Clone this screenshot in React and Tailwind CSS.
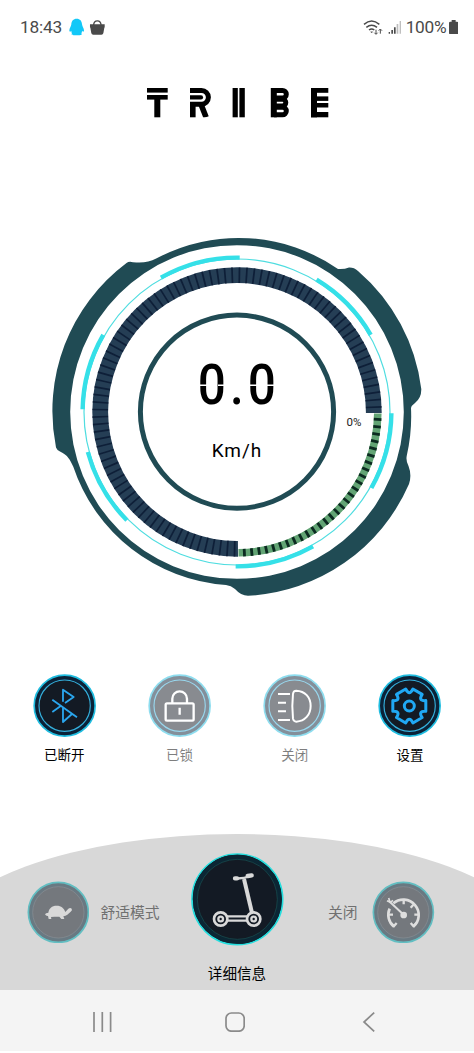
import React from "react";

const rad = (deg) => (deg * Math.PI) / 180;
const C = { x: 237, y: 412 };

// Angles are measured clockwise from twelve o'clock.
const at = (r, deg) =>
  `${(C.x + r * Math.sin(rad(deg))).toFixed(2)} ${(C.y - r * Math.cos(rad(deg))).toFixed(2)}`;
const arc = (r, from, to) =>
  `M${at(r, from)}A${r} ${r} 0 ${to - from > 180 ? 1 : 0} 1 ${at(r, to)}`;

const thickArcs = [
  [-29.5, 1],
  [31, 60],
  [90.5, 119.5],
  [150.5, 180.5],
  [225.5, 255],
  [271, 300],
];

const bezel =
  "M156.7 258.3 C149 262.4 143 262.8 133 262.2 Q129 261 126.5 263 A185 185 0 0 0 56 447.5 Q56.5 449.5 60 451.5 C68 455 70 460 73.3 466.7 " +
  "A174 174 0 0 0 226 585 Q231 585.5 235 589 Q241 595.8 248 595.8 A186 186 0 0 0 409 484 Q412 475 408.5 466 Q405.8 461 406.7 456 " +
  "A175 175 0 0 0 411 408 Q411.5 405.5 415 403 Q421.5 398 421.3 389 A186 186 0 0 0 358 271 Q354 267.4 349 267.6 Q344 269.5 338 269 " +
  "A174.7 174.7 0 0 0 156.7 258.3 Z M403.8 412 A166.8 166.8 0 1 0 70.2 412 A166.8 166.8 0 1 0 403.8 412 Z";

function Gauge() {
  return (
    <div className="relative h-[370px] w-full shrink-0">
      <svg viewBox="0 230 474 370" className="block h-[370px] w-[474px]" fill="none">
        <path d={bezel} fill="#204b54" fillRule="evenodd" />
        <circle cx={C.x} cy={C.y} r="153" stroke="#4fdde0" strokeWidth="1.2" />
        {thickArcs.map(([a, b]) => (
          <path key={a} d={arc(154.4, a, b)} stroke="#35e0e8" strokeWidth="4.4" />
        ))}
        <path d={arc(136.8, 179.6, 450.4)} stroke="#253e55" strokeWidth="15.8" />
        {Array.from({ length: 90 }, (_, i) => 181 + i * 3).map((a) => (
          <path key={a} d={`M${at(129, a)}L${at(144.6, a)}`} stroke="#0e1f38" strokeWidth="1.7" />
        ))}
        <path d={arc(140.8, 90.6, 179.4)} stroke="#62a474" strokeWidth="7.6" />
        {Array.from({ length: 29 }, (_, i) => 93 + i * 3).map((a) => (
          <path key={a} d={`M${at(137, a)}L${at(144.6, a)}`} stroke="#0b2a20" strokeWidth="2.8" />
        ))}
        <circle cx={C.x} cy="411.7" r="96.6" stroke="#204b54" strokeWidth="5" />
      </svg>

      <div className="absolute inset-x-0 top-[122px] flex flex-col items-center">
        <div className="relative h-[66px] w-[90px]">
          <div className="flex origin-center scale-x-[0.9] justify-center whitespace-nowrap pl-[4px] font-[Roboto,sans-serif] text-[55px] font-medium leading-[66px] tracking-[4.4px] text-black">
            0.0
          </div>
          <svg viewBox="192 352 90 66" className="absolute inset-0 h-[66px] w-[90px]" stroke="#fff" strokeWidth="1.4">
            <path d="M199 385.3h10M218 385.3h10M248 385.3h10M267 385.3h10" />
          </svg>
        </div>
        <div className="mt-[22px] font-[Roboto,sans-serif] text-[19px] leading-[22px] tracking-[1px] text-black">Km/h</div>
      </div>
      <div className="absolute left-[346.5px] top-[185px] font-[Roboto,sans-serif] text-[11.5px] leading-[14px] text-[#222]">0%</div>
    </div>
  );
}

function Logo() {
  return (
    <svg viewBox="140 80 200 45" className="h-[45px] w-[200px]" fill="#000" role="img" aria-label="TRIIBE">
      <rect x="147" y="88" width="20.7" height="4.6" />
      <rect x="147" y="95" width="20.7" height="4.6" />
      <rect x="154.3" y="99" width="6" height="18.3" />
      <g fill="none" stroke="#000">
        <path d="M190 90.4h11.5a6.9 6.9 0 0 1 0 13.8h-11.5" strokeWidth="5" />
        <path d="M190 97.4h11" strokeWidth="4.2" strokeLinecap="round" />
        <path d="M192.8 102v15.3" strokeWidth="5.6" />
        <path d="M200.5 103l5.6 14.3" strokeWidth="5.6" />
      </g>
      <rect x="187" y="93" width="3" height="9" fill="#fff" />
      <rect x="202" y="117.3" width="9" height="3" fill="#fff" />
      <rect x="232.6" y="88" width="5.2" height="29.3" />
      <rect x="239.4" y="88" width="5.4" height="29.3" />
      <rect x="270.8" y="88" width="6" height="29.3" />
      <g fill="none" stroke="#000" strokeWidth="5">
        <path d="M274 90.5h8.500a3.600 3.600 0 0 1 0 7.600h-8.500" />
        <path d="M274 99.300h8.500a3.300 3.300 0 0 1 0 6.600h-8.500" />
        <path d="M274 107.200h8.500a3.600 3.600 0 0 1 0 7.600h-8.500" />
      </g>
      <rect x="311" y="88" width="6" height="29.3" />
      <rect x="311" y="88" width="17.3" height="4.8" />
      <rect x="311" y="96.4" width="17.3" height="4.5" />
      <rect x="311" y="103" width="17.3" height="4.5" />
      <rect x="311" y="112" width="17.3" height="5.3" />
    </svg>
  );
}

function StatusBar() {
  return (
    <header className="flex h-[54px] shrink-0 items-center pl-[20px] pr-[16px] font-[Roboto,sans-serif] text-[17.3px] text-[#4a4a4a]">
      <span className="w-[43px] leading-5 tracking-[-0.2px]">18:43</span>
      <svg viewBox="207 52 45 54" className="ml-[6px] h-[18px] w-[15px]" fill="#12c8f8">
        <path d="M230 54c-10 0-16 7-16 17-1 6-5 11-6 18 0 5 3 5 6 1 0 4 1 6 2 8-3 5-1 6 14 6s17-1 14-6c1-2 2-4 2-8 3 4 6 4 6-1-1-7-5-12-6-18 0-10-6-17-16-17z" />
      </svg>
      <svg viewBox="268 54 50 52" className="ml-[5px] h-[17px] w-[17px]" fill="#4a4a4a">
        <path d="M270 70h45v10h-1l-3 17q-1 5-6 5h-25q-5 0-6-5l-3-17h-1z" />
        <path d="M281 73c1-18 22-18 23 0" fill="none" stroke="#4a4a4a" strokeWidth="4" />
      </svg>
      <span className="grow" />
      <svg viewBox="368 52 60 50" className="h-[16.7px] w-[20px]" fill="none" stroke="#4a4a4a" strokeWidth="4.5">
        <path d="M371 68q23-20 46 0M378 77q16-13 32 0M386 85q8-6 16 0" />
        <path d="M391 90h6l-3 4z" fill="#4a4a4a" strokeWidth="1" />
        <path d="M407 84v13M402 93l5 5 5-5M420 96v-13M415 87l5-5 5 5" strokeWidth="3" />
      </svg>
      <svg viewBox="448 60 40 42" className="ml-[5px] h-[14px] w-[13.3px]" fill="#4a4a4a">
        <path d="M450 96h4v5h-4zM458 90h5v11h-5zM466 82h5v19h-5z" />
        <path d="M474 72h5v29h-5zM483 63h4v38h-4z" fill="#bdbdbd" />
      </svg>
      <span className="ml-[4px] w-[43px] leading-5 tracking-[-0.3px]">100%</span>
      <svg viewBox="635 57 28 43" className="h-[14.3px] w-[9.3px]" fill="#4a4a4a">
        <path d="M643 57h12v5h4q4 0 4 4v30q0 4-4 4h-20q-4 0-4-4v-30q0-4 4-4h4z" />
      </svg>
    </header>
  );
}

const gearPath = (() => {
  const p = (r, d) => `${(518 + r * Math.sin(rad(d))).toFixed(1)} ${(137 - r * Math.cos(rad(d))).toFixed(1)}`;
  let d = "";
  for (let k = 0; k < 6; k++) {
    const a = 30 + 60 * k;
    d += `${k ? "L" : "M"}${p(52, a - 18)}L${p(52, a + 18)}Q${p(29, a + 30)} ${p(52, a + 42)}`;
  }
  return d + "Z";
})();

function RoundButton({ viewBox, label, dim, children }) {
  const [x, y, s] = viewBox.split(" ").map(Number);
  const cx = x + s / 2;
  const cy = y + s / 2;
  return (
    <button className={`flex w-[115.3px] flex-col items-center ${dim ? "opacity-50" : ""}`}>
      <svg viewBox={viewBox} className="h-[63.3px] w-[63.3px]" fill="none" strokeLinejoin="round">
        <circle cx={cx} cy={cy} r="91.5" fill="#0b2238" stroke="#20bde0" strokeWidth="5" />
        <circle cx={cx} cy={cy} r="77" fill="#131a24" stroke="#35b0dc" strokeWidth="3.5" />
        {children}
      </svg>
      <span className="mt-[7.5px] font-['Noto_Sans_CJK_SC',sans-serif] text-[13.5px] leading-5 text-black">{label}</span>
    </button>
  );
}

function Controls() {
  return (
    <section className="mt-[73.5px] flex h-[96px] shrink-0 pl-[6.5px]">
      <RoundButton viewBox="97 41 190 190" label="已断开">
        <path d="M187 124V88l32 22-26 18M155 118l74 53M155 155l24-17M187 141v44l27-24" stroke="#2aa6ee" strokeWidth="5.5" />
      </RoundButton>
      <RoundButton viewBox="444 41 190 190" label="已锁" dim>
        <g stroke="#fff" strokeWidth="7">
          <rect x="497" y="129" width="84" height="52" rx="4" />
          <path d="M517 129v-14a22 22 0 0 1 44 0v14M539 142v21" />
        </g>
      </RoundButton>
      <RoundButton viewBox="78 41 190 190" label="关闭" dim>
        <g stroke="#fff" strokeWidth="6">
          <path d="M123 101h36M123 127h24M123 153h24M123 179h36" />
          <path d="M168 101q1-10 10-10c26 1 43 20 43 46s-17 46-43 47q-8 0-10-9-4-38 0-74z" />
        </g>
      </RoundButton>
      <RoundButton viewBox="424 41 190 190" label="设置">
        <path d={gearPath} stroke="#20a8f4" strokeWidth="9" />
        <circle cx="518" cy="137" r="15" stroke="#20a8f4" strokeWidth="9" />
      </RoundButton>
    </section>
  );
}

function SideDial({ viewBox, children }) {
  const [x, y, s] = viewBox.split(" ").map(Number);
  return (
    <svg viewBox={viewBox} className="h-[62.7px] w-[62.7px] shrink-0" fill="none">
      <circle cx={x + s / 2} cy={y + s / 2} r="90" fill="#697982" stroke="#62bec2" strokeWidth="5" />
      <circle cx={x + s / 2} cy={y + s / 2} r="77" fill="#74787d" stroke="#8a9095" strokeWidth="2" />
      {children}
    </svg>
  );
}

function BottomPanel() {
  return (
    <section className="relative h-[156px] w-full shrink-0 overflow-hidden font-['Noto_Sans_CJK_SC',sans-serif]">
      <div className="absolute left-[-62px] top-0 h-[222px] w-[598px] rounded-[50%] bg-[#d8d8d8]" />
      <div className="absolute inset-x-0 bottom-0 h-[42px] bg-[#d8d8d8]" />
      <div className="relative flex h-[131px] items-center">
        <div className="mt-[25px] flex w-[191px] items-center pl-[26.7px]">
          <SideDial viewBox="80 181 188 188">
            <path
              d="M134 281q2-5 10-5c2-13 10-21 25-21 14 0 22 8 26 19l9-10q6-4 10 0 3 5-3 9l-10 9q-5 4-12 5l3 8h-9l-6-7h-15q-8 0-10 1l1 6h-8l-2-9q-6 1-9-5z"
              fill="#d9d9d9"
            />
          </SideDial>
          <span className="ml-[11px] whitespace-nowrap text-[14.8px] leading-5 text-[#707070]">舒适模式</span>
        </div>
        <svg viewBox="572 100 278 278" className="h-[92.7px] w-[92.7px] shrink-0" fill="none">
          <circle cx="711" cy="239" r="136" fill="#131a24" stroke="#25dede" strokeWidth="5" />
          <circle cx="711" cy="239" r="127" stroke="#0b2634" strokeWidth="13" />
          <circle cx="711" cy="239" r="120" stroke="#175456" strokeWidth="2" />
          <g stroke="#d9d9d9" strokeLinecap="round">
            <path d="M703 176q24 2 48-7" strokeWidth="7" />
            <path d="M704 176h6M742 169l12-2" strokeWidth="13" />
            <path d="M731 178l24 102" strokeWidth="12" strokeLinecap="butt" />
            <path d="M680 290h58M680 303h58" strokeWidth="7" />
            <circle cx="661" cy="298" r="20" strokeWidth="8" fill="#131a24" />
            <circle cx="760" cy="298" r="20" strokeWidth="8" fill="#131a24" />
            <circle cx="661" cy="298" r="7" strokeWidth="7" />
            <circle cx="760" cy="298" r="7" strokeWidth="7" />
          </g>
        </svg>
        <div className="mt-[25px] flex grow items-center justify-end pr-[39.3px]">
          <span className="mr-[14.5px] whitespace-nowrap text-[14.8px] leading-5 text-[#707070]">关闭</span>
          <SideDial viewBox="405 181 188 188">
            <g stroke="#dedede" strokeWidth="8">
              <path d="M471 318a45 45 0 0 1-13-54M469 248a45 45 0 0 1 60 70" />
              <path d="M462 307l9 9 8-9M538 307l-9 9-8-9M500 238v13M529 252l-8 9M545 282h-13M455 282h13" strokeWidth="7" />
              <path d="M458 243l42 39" strokeWidth="6" />
              <path d="M455 232l4 12M450 240l10 5 8-6" strokeWidth="5" />
            </g>
            <circle cx="500" cy="283" r="10" fill="#dedede" />
          </SideDial>
        </div>
      </div>
      <div className="relative -mt-[2px] text-center text-[14.6px] leading-5 text-black">详细信息</div>
    </section>
  );
}

function NavBar() {
  return (
    <nav className="grid h-[61px] shrink-0 grid-cols-[133px_135.5px_16px] items-center bg-[#f4f4f4] pl-[92px] pt-[3px]">
      <svg viewBox="0 0 20 20" className="h-5 w-5" stroke="#8a8a8a" strokeWidth="1.7">
        <path d="M2 0v20M10.3 0v20M18.6 0v20" />
      </svg>
      <svg viewBox="0 0 20 20" className="h-5 w-5" fill="none" stroke="#8a8a8a" strokeWidth="1.7">
        <rect x="1" y="1" width="18.2" height="18.2" rx="5.5" />
      </svg>
      <svg viewBox="0 0 16 20" className="h-5 w-4" fill="none" stroke="#8a8a8a" strokeWidth="1.7">
        <path d="M13.200 0.6L3 10l10.2 9.4" />
      </svg>
    </nav>
  );
}

export default function App() {
  return (
    <main className="flex h-[1053px] w-[474px] flex-col overflow-hidden bg-white">
      <StatusBar />
      <div className="mt-[26px] flex h-[45px] shrink-0 justify-center pl-[6px]">
        <Logo />
      </div>
      <div className="h-[105px] shrink-0" />
      <Gauge />
      <Controls />
      <div className="h-[64.5px] shrink-0" />
      <BottomPanel />
      <NavBar />
    </main>
  );
}
